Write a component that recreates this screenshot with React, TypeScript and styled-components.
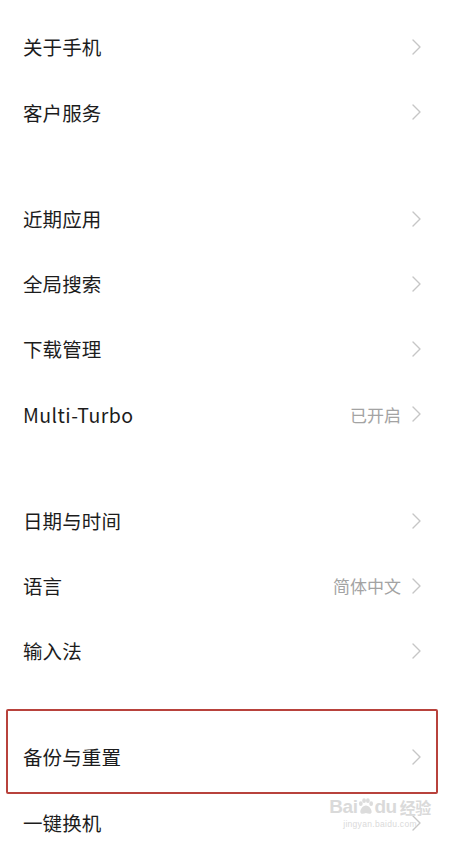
import React from "react";
import styled, { createGlobalStyle } from "styled-components";

const Global = createGlobalStyle`
  html, body { margin: 0; padding: 0; background: #ffffff; }
  body { font-family: "Noto Sans CJK SC", "Noto Sans", sans-serif; -webkit-font-smoothing: antialiased; }
`;

const Page = styled.div`
  position: relative;
  width: 451px;
  height: 841px;
  overflow: hidden;
  background: #ffffff;
  padding-top: 14.5px;
  box-sizing: border-box;
  display: flex;
  flex-direction: column;
  gap: 40.7px;
`;

const Group = styled.div`
  display: flex;
  flex-direction: column;
`;

const Row = styled.div`
  height: 65.33px;
  display: flex;
  align-items: center;
  padding: 0 30px 0 23px;
  box-sizing: border-box;
`;

const Label = styled.span<{ $latin?: boolean }>`
  flex: 1;
  font-size: 19.5px;
  color: #1c1c1c;
  letter-spacing: ${(p) => (p.$latin ? "0.45px" : "0.1px")};
  line-height: 1;
`;

const Value = styled.span`
  font-size: 17px;
  color: #a3a3a3;
  margin-right: 11px;
  line-height: 1;
`;

const Chevron = () => (
  <svg width="9" height="16" viewBox="0 0 9 16" style={{ display: "block" }}>
    <polyline points="1,1 8,8 1,15" fill="none" stroke="#c6c6c6" strokeWidth="1.4" strokeLinecap="round" strokeLinejoin="round" />
  </svg>
);

const Highlight = styled.div`
  position: absolute;
  left: 6px;
  top: 709px;
  width: 432px;
  height: 85px;
  border: 2px solid #b8423c;
  border-radius: 2px;
  box-sizing: border-box;
  pointer-events: none;
`;

const Watermark = styled.div`
  position: absolute;
  left: 330px;
  top: 797px;
  width: 100px;
  display: flex;
  flex-direction: column;
  align-items: center;
  color: #dadada;
  font-family: "Liberation Sans", Arial, sans-serif;
  white-space: nowrap;
  pointer-events: none;
`;

const WmLogo = styled.div`
  display: flex;
  align-items: center;
  font-size: 19px;
  font-weight: bold;
  line-height: 1;
  letter-spacing: -0.5px;
`;

const WmCn = styled.span`
  font-family: "Noto Sans CJK SC", sans-serif;
  font-size: 16px;
  margin-left: 3px;
  font-weight: bold;
`;

const WmUrl = styled.div`
  font-size: 8.5px;
  margin-top: 3px;
  letter-spacing: 0.3px;
`;

type Item = { label: string; value?: string };

const groups: Item[][] = [
  [{ label: "关于手机" }, { label: "客户服务" }],
  [
    { label: "近期应用" },
    { label: "全局搜索" },
    { label: "下载管理" },
    { label: "Multi-Turbo", value: "已开启" },
  ],
  [{ label: "日期与时间" }, { label: "语言", value: "简体中文" }, { label: "输入法" }],
  [{ label: "备份与重置" }, { label: "一键换机" }],
];

export default function App() {
  return (
    <>
      <Global />
      <Page>
        {groups.map((g, gi) => (
          <Group key={gi}>
            {g.map((it) => (
              <Row key={it.label}>
                <Label $latin={/^[A-Za-z]/.test(it.label)}>{it.label}</Label>
                {it.value && <Value>{it.value}</Value>}
                <Chevron />
              </Row>
            ))}
          </Group>
        ))}
        <Highlight />
        <Watermark>
          <WmLogo>
            <span>Bai</span>
            <svg width="17" height="17" viewBox="0 0 18 18">
              <g fill="#dcdcdc">
                <ellipse cx="4" cy="6" rx="2" ry="2.6" />
                <ellipse cx="7.5" cy="2.8" rx="2" ry="2.5" />
                <ellipse cx="11.5" cy="2.8" rx="2" ry="2.5" />
                <ellipse cx="15" cy="6" rx="2" ry="2.6" />
                <path d="M9.5 8 C6 8 3.5 12 3.5 14.5 C3.5 17 6 17 9.5 16 C13 17 15.5 17 15.5 14.5 C15.5 12 13 8 9.5 8 Z" />
              </g>
            </svg>
            <span>du</span>
            <WmCn>经验</WmCn>
          </WmLogo>
          <WmUrl>jingyan.baidu.com</WmUrl>
        </Watermark>
      </Page>
    </>
  );
}
